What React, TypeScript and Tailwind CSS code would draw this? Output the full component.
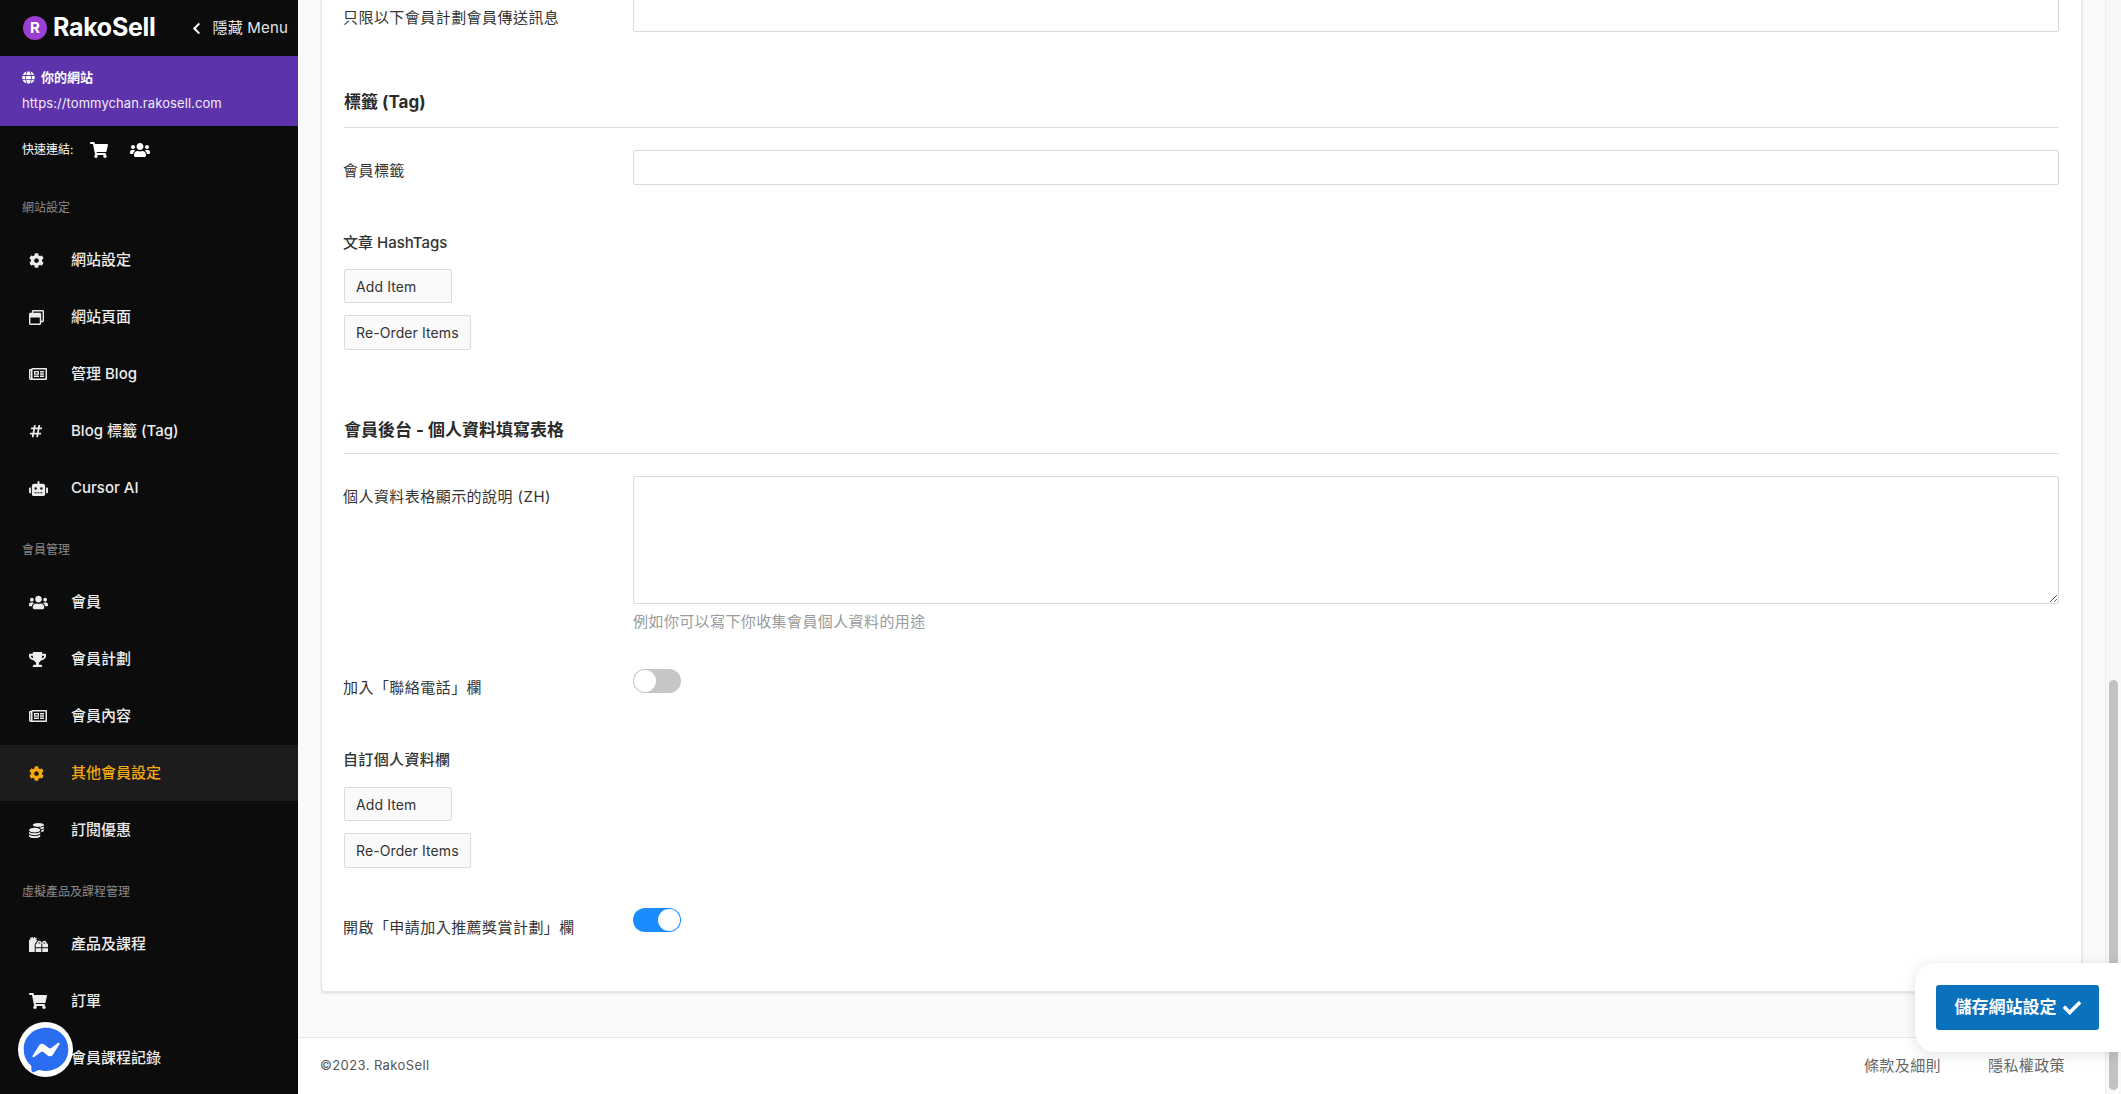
import React from 'react';
import { IconType } from 'react-icons';
import {
    FaChevronLeft, FaGlobe, FaShoppingCart, FaUsers, FaCog, FaRegWindowRestore, FaRegNewspaper,
    FaHashtag, FaRobot, FaTrophy, FaCoins, FaGifts, FaCheck, FaFacebookMessenger, FaBook,
} from 'react-icons/fa';

type NavItem = { label: string; icon: IconType; size: number; active?: boolean };

const navGroups: { title: string; items: NavItem[] }[] = [
    {
        title: '網站設定',
        items: [
            { label: '網站設定', icon: FaCog, size: 15 },
            { label: '網站頁面', icon: FaRegWindowRestore, size: 15 },
            { label: '管理 Blog', icon: FaRegNewspaper, size: 18 },
            { label: 'Blog 標籤 (Tag)', icon: FaHashtag, size: 14 },
            { label: 'Cursor AI', icon: FaRobot, size: 19 },
        ],
    },
    {
        title: '會員管理',
        items: [
            { label: '會員', icon: FaUsers, size: 19 },
            { label: '會員計劃', icon: FaTrophy, size: 17 },
            { label: '會員內容', icon: FaRegNewspaper, size: 18 },
            { label: '其他會員設定', icon: FaCog, size: 15, active: true },
            { label: '訂閱優惠', icon: FaCoins, size: 15 },
        ],
    },
    {
        title: '虛擬產品及課程管理',
        items: [
            { label: '產品及課程', icon: FaGifts, size: 19 },
            { label: '訂單', icon: FaShoppingCart, size: 18 },
            { label: '會員課程記錄', icon: FaBook, size: 15 },
        ],
    },
];

function Sidebar() {
    return (
        <aside className="w-[298px] h-full shrink-0 overflow-hidden bg-[#0c0c0d] text-[#ececec]">
            <div className="h-[56px] flex items-center pl-[23px]">
                <span className="w-[24px] h-[24px] rounded-full bg-[#9b3fd0] flex items-center justify-center text-white text-[15px] font-bold">R</span>
                <span className="ml-[6px] text-white text-[25px] font-bold tracking-[-0.3px]">RakoSell</span>
                <FaChevronLeft className="ml-[34px] text-white" size={13} />
                <span className="ml-[10px] text-[15px] tracking-[0.2px] text-[#e6e6e6]">隱藏 Menu</span>
            </div>
            <div className="h-[70px] bg-[#5d33ab] px-[22px] pt-[9px] text-white">
                <div className="flex items-center gap-[6px] text-[13px] font-bold leading-[24px]">
                    <FaGlobe size={13} />
                    你的網站
                </div>
                <div className="text-[13px] leading-[29px] tracking-[0.09px] text-[#f0ecfa]">https://tommychan.rakosell.com</div>
            </div>
            <div className="h-[48px] mt-0 flex items-center pl-[22px] text-[12px] text-white">
                快速連結:
                <FaShoppingCart className="ml-[17px]" size={18} />
                <FaUsers className="ml-[22px]" size={20} />
            </div>
            {navGroups.map((group) => (
                <div key={group.title} className="pt-[24px]">
                    <div className="h-[20px] pl-[22px] text-[12px] leading-[20px] text-[#8a8a8a]">{group.title}</div>
                    <div className="mt-[14px] flex flex-col gap-px">
                        {group.items.map((item) => {
                            const Icon = item.icon;
                            return (
                                <div
                                    key={item.label}
                                    className={`h-[56px] flex items-center pl-[29px] text-[15px] font-medium ${item.active ? 'bg-[#1d1c1c] text-[#f5a80e]' : ''}`}
                                >
                                    <span className="w-[42px] shrink-0"><Icon size={item.size} /></span>
                                    {item.label}
                                </div>
                            );
                        })}
                    </div>
                </div>
            ))}
        </aside>
    );
}

function FieldLabel({ children, className = '' }: { children: React.ReactNode; className?: string }) {
    return <div className={`-ml-px w-[290px] shrink-0 text-[15px] leading-[22px] tracking-[0.45px] text-[#333] ${className}`}>{children}</div>;
}

function SectionHeading({ children, className = '' }: { children: React.ReactNode; className?: string }) {
    return <div className={`border-b border-[#dedede] text-[17px] font-bold text-[#2b2b2b] ${className}`}>{children}</div>;
}

function RepeaterButtons() {
    return (
        <div className="flex flex-col items-start gap-[12px]">
            <button className="w-[108px] h-[34px] border border-[#dcdcdc] rounded-[2px] bg-[#fafafa] pl-[11px] text-left text-[14px] tracking-[0.1px] text-[#333]">Add Item</button>
            <button className="h-[35px] border border-[#dcdcdc] rounded-[2px] bg-[#fafafa] px-[11px] text-[14px] tracking-[0.1px] text-[#333]">Re-Order Items</button>
        </div>
    );
}

function Toggle({ on }: { on: boolean }) {
    return (
        <div className={`w-[48px] h-[24px] rounded-full flex items-center p-px ${on ? 'bg-[#1a8cff] justify-end' : 'bg-[#c6c6c6] justify-start'}`}>
            <span className="w-[22px] h-[22px] rounded-full bg-white" />
        </div>
    );
}

function Card() {
    return (
        <div className="bg-white border-x border-b border-[#e6e6e6] rounded-b-[3px] shadow-sm px-[22px] pb-[52px]">
            <div className="flex -mt-[20px]">
                <FieldLabel className="pt-[27px]">只限以下會員計劃會員傳送訊息</FieldLabel>
                <input className="flex-1 h-[52px] border border-[#d9d9d9] rounded-[2px] bg-white" />
            </div>

            <SectionHeading className="mt-[55px] h-[41px] leading-[30px]">標籤 (Tag)</SectionHeading>
            <div className="flex mt-[22px]">
                <FieldLabel className="pt-[10px]">會員標籤</FieldLabel>
                <input className="flex-1 h-[35px] border border-[#d9d9d9] rounded-[2px] bg-white" />
            </div>

            <div className="mt-[47px] -ml-px text-[15px] font-medium leading-[22px] text-[#333]">文章 HashTags</div>
            <div className="mt-[15px]"><RepeaterButtons /></div>

            <SectionHeading className="mt-[64px] h-[40px] leading-[32px]">會員後台 - 個人資料填寫表格</SectionHeading>
            <div className="flex mt-[22px]">
                <FieldLabel className="pt-[10px]">個人資料表格顯示的說明 (ZH)</FieldLabel>
                <div className="flex-1">
                    <textarea className="block w-full h-[128px] border border-[#d9d9d9] rounded-[2px] bg-white resize-y" />
                    <div className="mt-[8px] text-[15px] leading-[20px] tracking-[0.4px] text-[#9a9a9a]">例如你可以寫下你收集會員個人資料的用途</div>
                </div>
            </div>

            <div className="flex mt-[37px]">
                <FieldLabel className="pt-[8px]">加入「聯絡電話」欄</FieldLabel>
                <Toggle on={false} />
            </div>

            <div className="mt-[50px] -ml-px text-[15px] font-medium leading-[22px] tracking-[0.35px] text-[#333]">自訂個人資料欄</div>
            <div className="mt-[16px]"><RepeaterButtons /></div>

            <div className="flex mt-[40px]">
                <FieldLabel className="pt-[9px]">開啟「申請加入推薦獎賞計劃」欄</FieldLabel>
                <Toggle on />
            </div>
        </div>
    );
}

export default function App() {
    return (
        <div className="relative flex h-screen w-full overflow-hidden bg-[#fafafa] font-[Inter,'Noto_Sans_CJK_TC',sans-serif]">
            <Sidebar />

            <main className="flex-1 min-w-0 flex flex-col justify-between overflow-hidden">
                <div className="px-[23px]"><Card /></div>
                <footer className="h-[57px] shrink-0 border-t border-[#e6e6e6] bg-white pl-[22px] pr-[40px] flex items-center justify-between">
                    <span className="text-[13px] tracking-[0.4px] text-[#555]">©2023. RakoSell</span>
                    <div className="flex gap-[47px] text-[15px] tracking-[0.4px] text-[#666]">
                        <span>條款及細則</span>
                        <span>隱私權政策</span>
                    </div>
                </footer>
            </main>

            <div className="w-[16px] shrink-0 h-full flex flex-col justify-end bg-[#f8f8f8] border-l border-[#ececec] pl-[3px] pr-[3px] pb-[4px]">
                <div className="h-[410px] rounded-full bg-[#c2c2c2]" />
            </div>

            <div className="absolute right-0 top-[963px] w-[206px] h-[89px] bg-white rounded-l-[20px] shadow-[0_2px_14px_rgba(0,0,0,0.12)] pl-[21px] pt-[22px]">
                <button className="w-[163px] h-[45px] rounded-[3px] bg-[#0a72bd] flex items-center justify-center gap-[6px] text-[17px] font-bold text-white">
                    儲存網站設定
                    <FaCheck size={18} />
                </button>
            </div>

            <div className="absolute left-[18px] top-[1022px] w-[55px] h-[55px] rounded-full bg-white flex items-center justify-center">
                <FaFacebookMessenger size={46} className="text-[#2a6df0]" />
            </div>
        </div>
    );
}
